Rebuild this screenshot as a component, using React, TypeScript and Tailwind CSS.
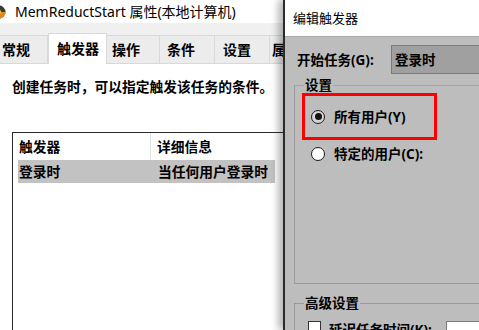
const tabs = [
  { label: "常规", w: "w-[48px]", pl: "pl-[2px]" },
  { label: "触发器", w: "w-[59px]", pl: "pl-[8px]", active: true },
  { label: "操作", w: "w-[53px]", pl: "pl-[5px]" },
  { label: "条件", w: "w-[55px]", pl: "pl-[7px]" },
  { label: "设置", w: "w-[55px]", pl: "pl-[8px]" },
  { label: "属性", w: "w-[40px]", pl: "pl-[2px]" },
];

function PropertiesWindow() {
  return (
    <div className="w-[283px] shrink-0 flex flex-col bg-white">
      {/* title bar */}
      <div className="h-[23px] flex items-center bg-white">
        <svg width="14" height="14" viewBox="0 0 14 14" className="-ml-[8px] shrink-0">
          <circle cx="7" cy="7" r="6.5" fill="#3a3a3a" />
          <path d="M7 7 L13.5 7 A6.5 6.5 0 0 1 7 13.5 Z" fill="#e08a1e" />
          <circle cx="7" cy="7" r="2.2" fill="#f0c040" />
        </svg>
        <span className="ml-[9px] text-[14px] leading-[20px] whitespace-nowrap">
          MemReductStart 属性(本地计算机)
        </span>
      </div>

      {/* tab strip */}
      <div className="h-[41px] flex items-end bg-[#f0f0f0] border-b border-[#d9d9d9]">
        {tabs.map((t) =>
          t.active ? (
            <div
              key={t.label}
              className={`${t.w} ${t.pl} h-[31px] -mb-px shrink-0 flex items-center bg-white border-x border-t border-[#d9d9d9] text-[14px] font-bold leading-[18px] whitespace-nowrap`}
            >
              {t.label}
            </div>
          ) : (
            <div
              key={t.label}
              className={`${t.w} ${t.pl} h-[28px] shrink-0 flex items-center bg-[#ececec] border-r border-t border-[#d9d9d9] text-[14px] font-bold leading-[18px] whitespace-nowrap overflow-hidden`}
            >
              {t.label}
            </div>
          )
        )}
      </div>

      {/* page */}
      <div className="flex-1 flex flex-col pt-[14px]">
        <p className="pl-[12px] text-[13.75px] font-bold leading-[18px] whitespace-nowrap">
          创建任务时，可以指定触发该任务的条件。
        </p>
        <div className="mt-[36px] ml-[12px] flex-1 border-l border-t border-[#2a2a2a] pl-[5px]">
          <div className="h-[27px] flex items-center text-[13.75px] font-bold leading-[18px]">
            <div className="w-[133px] h-full flex items-center pl-[1px] border-r border-[#e3e3e3]">
              触发器
            </div>
            <div className="pl-[6px] whitespace-nowrap">详细信息</div>
          </div>
          <div className="h-[23px] w-[257px] flex items-center bg-[#c2c2c2] text-[13.75px] font-bold leading-[18px]">
            <div className="w-[134px] pl-[1px]">登录时</div>
            <div className="pl-[6px] whitespace-nowrap">当任何用户登录时</div>
          </div>
        </div>
      </div>
    </div>
  );
}

function Radio({ checked }: { checked?: boolean }) {
  return checked ? (
    <span className="w-[14px] h-[14px] shrink-0 rounded-full border-[1.5px] border-[#1a1a1a] bg-[#d6d6d6] flex items-center justify-center">
      <span className="w-[7px] h-[7px] rounded-full bg-[#111]" />
    </span>
  ) : (
    <span className="w-[14px] h-[14px] shrink-0 rounded-full border-[1.5px] border-[#1a1a1a] bg-white" />
  );
}

function EditTrigger() {
  return (
    <div className="relative z-10 flex-1 flex flex-col border-l-2 border-[#2b2b2b] shadow-[-5px_0_7px_rgba(0,0,0,0.28)] overflow-hidden">
      <div className="h-[36px] shrink-0 flex items-center pl-[8px] bg-white text-[13px] leading-[18px]">
        编辑触发器
      </div>
      <div className="flex-1 bg-[#bdbdbd] border-t border-[#a8a8a8] pt-[8px] text-[13.5px] font-bold leading-[18px]">
        <div className="flex items-center">
          <span className="w-[106px] pl-[12px] whitespace-nowrap">开始任务(G):</span>
          <div className="flex-1 -mr-[4px] h-[29px] flex items-center pl-[3px] bg-[#a0a0a0] border border-[#7a7a7a]">
            登录时
          </div>
        </div>

        <fieldset className="mt-[2px] ml-[9px] -mr-[10px] h-[208px] border border-[#999] border-t-[#a4a4a4]">
          <legend className="ml-[9px] px-[1px] leading-[18px] font-bold">设置</legend>
          <div className="-mt-[1px] ml-[7px] w-[135px] h-[47px] border-[3px] border-[#ff0000] flex items-center pl-[6px] gap-[9px]">
            <Radio checked />
            <span className="whitespace-nowrap">所有用户(Y)</span>
          </div>
          <div className="mt-[5px] ml-[16px] flex items-center gap-[9px]">
            <Radio />
            <span className="whitespace-nowrap">特定的用户(C):</span>
          </div>
        </fieldset>

        <fieldset className="mt-[10px] ml-[9px] -mr-[10px] h-[60px] border border-[#999]">
          <legend className="ml-[9px] px-[1px] leading-[18px] font-bold">高级设置</legend>
          <div className="mt-[9px] ml-[13px] flex items-start gap-[8px]">
            <span className="w-[13px] h-[13px] shrink-0 border border-[#333] bg-white" />
            <span className="whitespace-nowrap">延迟任务时间(K):</span>
            <span className="ml-[6px] w-[40px] h-[20px] bg-white border border-[#7a7a7a]" />
          </div>
        </fieldset>
      </div>
    </div>
  );
}

export default function App() {
  return (
    <div className="w-[479px] h-[330px] flex overflow-hidden bg-white text-black font-['Noto_Sans','Noto_Sans_CJK_SC',sans-serif]">
      <PropertiesWindow />
      <EditTrigger />
    </div>
  );
}
